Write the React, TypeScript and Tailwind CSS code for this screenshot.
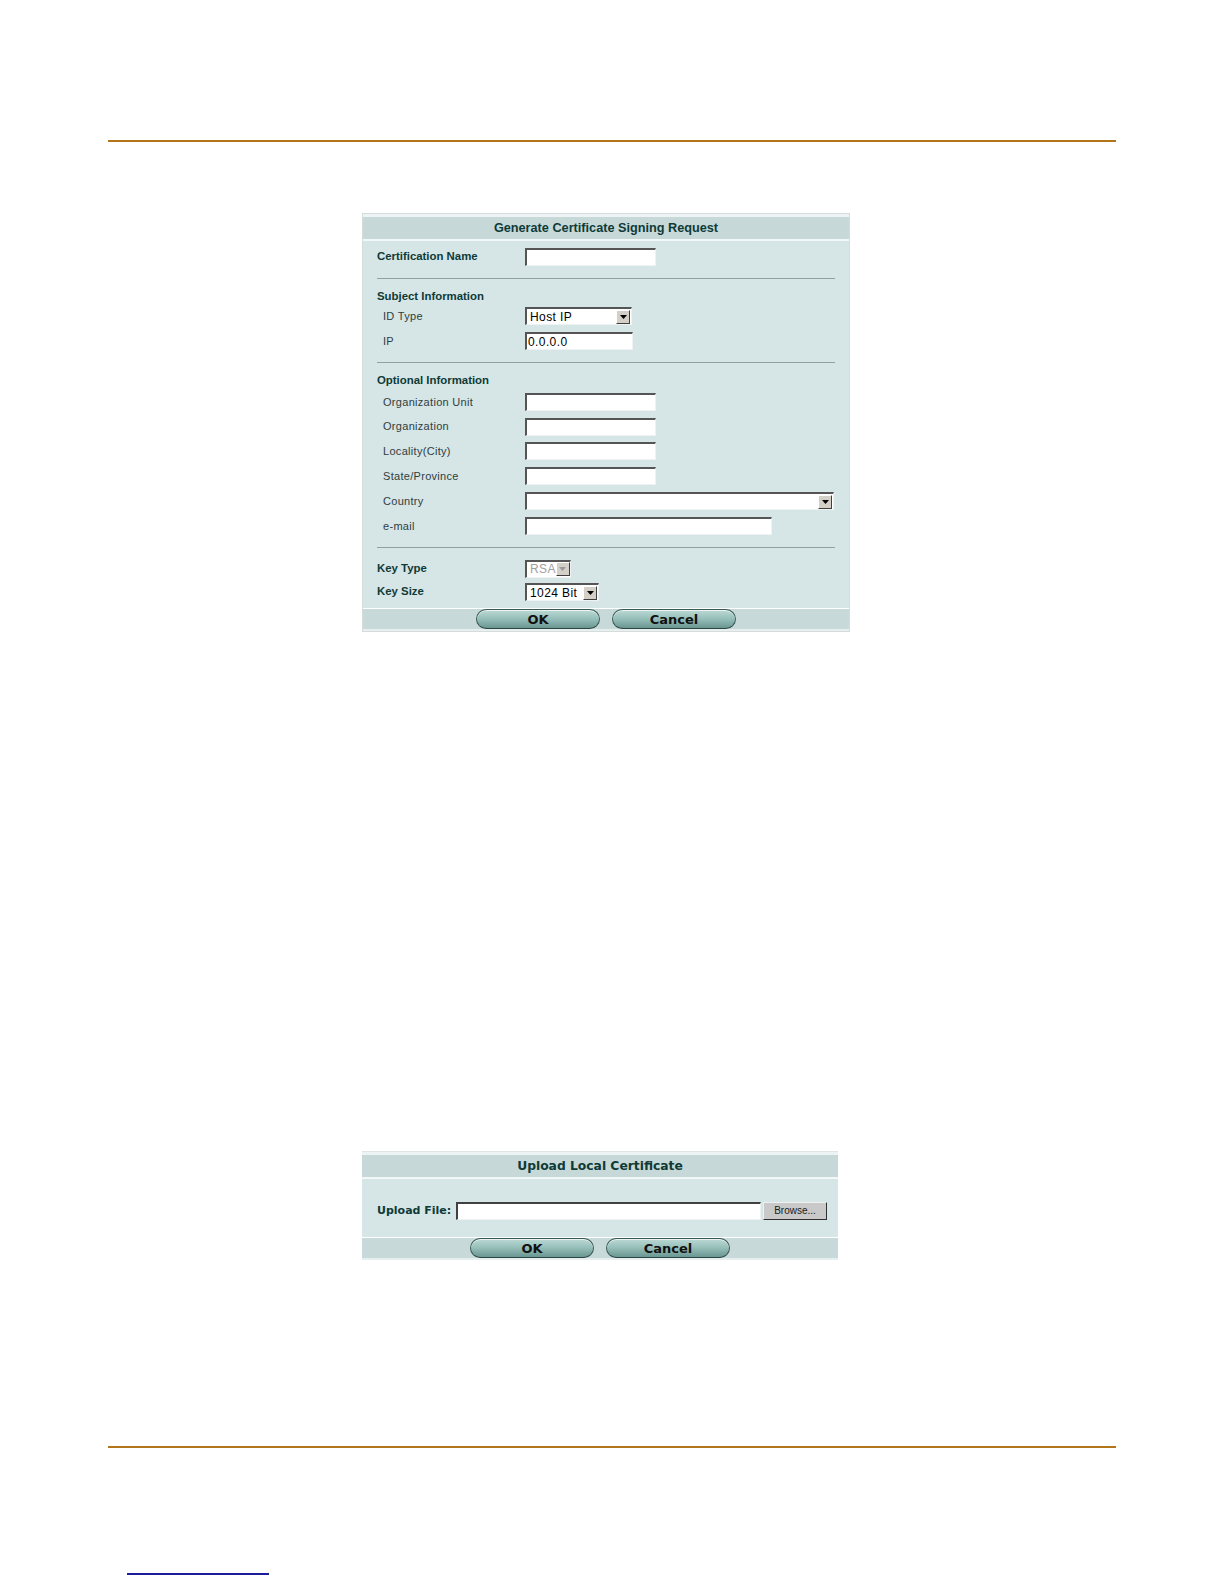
import React from "react";

const FONT = "font-['Liberation_Sans',Arial,sans-serif]";
const VERDANA = "font-['DejaVu_Sans',Verdana,sans-serif]";

function Arrow({ disabled }: { disabled?: boolean }) {
  return (
    <div className="w-[14px] h-[14px] bg-[#d4d0c8] border border-t-white border-l-white border-b-[#404040] border-r-[#404040] flex items-center justify-center shrink-0">
      <svg width="7" height="4" viewBox="0 0 7 4">
        <path d="M0 0h7L3.5 4z" fill={disabled ? "#9a9a9a" : "#000"} />
      </svg>
    </div>
  );
}

function TextBox({ w, value }: { w: string; value?: string }) {
  return (
    <div className={`${w} h-[18px] bg-white border-t-2 border-l-2 border-b border-r border-t-[#555] border-l-[#555] border-b-[#eef2f2] border-r-[#eef2f2] flex items-center pl-[1px] text-[12px] tracking-[0.4px] text-black`}>
      {value}
    </div>
  );
}

function SelectBox({ w, value, disabled }: { w: string; value?: string; disabled?: boolean }) {
  return (
    <div className={`${w} h-[18px] bg-white border-t-2 border-l-2 border-b border-r border-t-[#555] border-l-[#555] border-b-[#eef2f2] border-r-[#eef2f2] flex items-center justify-between pr-[1px]`}>
      <span className={`pl-[3px] text-[12px] tracking-[0.4px] ${disabled ? "text-[#a0a0a0]" : "text-black"}`}>{value}</span>
      <Arrow disabled={disabled} />
    </div>
  );
}

function Pill({ label }: { label: string }) {
  return (
    <div className={`w-[124px] h-[20px] rounded-full border border-[#3a5a56] border-b-[#2c4643] bg-gradient-to-b from-[#bcd9d5] via-[#95beb9] to-[#6a9691] shadow-[inset_0_1px_0_rgba(255,255,255,0.7)] flex items-center justify-center ${VERDANA} text-[13px] font-bold text-[#111]`}>
      {label}
    </div>
  );
}

function Row({ label, bold, h, children }: { label: string; bold?: boolean; h: string; children: React.ReactNode }) {
  return (
    <div className={`flex items-center ${h}`}>
      <div
        className={
          bold
            ? "w-[148px] text-[11.4px] font-bold text-[#0e3a37]"
            : "w-[148px] pl-[6px] text-[11px] tracking-[0.3px] text-[#2f3e3e]"
        }
      >
        {label}
      </div>
      {children}
    </div>
  );
}

function Sep() {
  return <div className="h-px bg-[#8ea2a2]" />;
}

// header band shared by both dialogs: thin light rim, band, white rule under it
function DialogHead({ children, className }: { children: React.ReactNode; className: string }) {
  return (
    <>
      <div className="h-[3px] bg-[#eef3f3]" />
      <div className={`h-[22px] bg-[#c6d8d8] flex items-center justify-center text-[#0e3a37] ${className}`}>{children}</div>
      <div className="h-[2px] bg-[#f2f7f7]" />
    </>
  );
}

function DialogFoot() {
  return (
    <>
      <div className="h-px bg-white" />
      <div className="bg-[#c7d9d8] h-[20px] flex items-start justify-center gap-[12px]">
        <Pill label="OK" />
        <Pill label="Cancel" />
      </div>
      <div className="h-[2px] bg-[#e6eeee]" />
    </>
  );
}

function CsrPanel() {
  return (
    <div className="ml-[362px] w-[488px] border border-[#d6dcdc] bg-[#d6e5e6]">
      <DialogHead className="text-[12.7px] font-bold pt-[2px]">Generate Certificate Signing Request</DialogHead>
      <div className="pl-[14px] pr-[14px] pt-[3px]">
        <Row label="Certification Name" bold h="h-[26px]">
          <TextBox w="w-[131px]" />
        </Row>
        <div className="mt-[7.5px]">
          <Sep />
        </div>
        <div className="h-[25px] pt-[9px] text-[11.4px] font-bold text-[#0e3a37] leading-[16px]">Subject Information</div>
        <Row label="ID Type" h="h-[25.5px]">
          <SelectBox w="w-[107px]" value="Host IP" />
        </Row>
        <Row label="IP" h="h-[24px]">
          <TextBox w="w-[108px]" value="0.0.0.0" />
        </Row>
        <div className="mt-[9px]">
          <Sep />
        </div>
        <div className="h-[26.5px] pt-[9px] text-[11.4px] font-bold text-[#0e3a37] leading-[17px]">Optional Information</div>
        <Row label="Organization Unit" h="h-[24.8px]">
          <TextBox w="w-[131px]" />
        </Row>
        <Row label="Organization" h="h-[24.8px]">
          <TextBox w="w-[131px]" />
        </Row>
        <Row label="Locality(City)" h="h-[24.8px]">
          <TextBox w="w-[131px]" />
        </Row>
        <Row label="State/Province" h="h-[24.8px]">
          <TextBox w="w-[131px]" />
        </Row>
        <Row label="Country" h="h-[24.8px]">
          <SelectBox w="w-[309px]" />
        </Row>
        <Row label="e-mail" h="h-[24.8px]">
          <TextBox w="w-[247px]" />
        </Row>
        <div className="mt-[9px]">
          <Sep />
        </div>
        <div className="mt-[8.5px]">
          <Row label="Key Type" bold h="h-[23.5px]">
            <SelectBox w="w-[46px]" value="RSA" disabled />
          </Row>
          <Row label="Key Size" bold h="h-[23.5px]">
            <SelectBox w="w-[74px]" value="1024 Bit" />
          </Row>
        </div>
      </div>
      <div className="mt-[4.7px]">
        <DialogFoot />
      </div>
    </div>
  );
}

function UploadPanel() {
  return (
    <div className="ml-[362px] w-[476px] border-t border-[#dfe5e5] bg-[#d6e5e6]">
      <DialogHead className={`${VERDANA} text-[12.3px] font-bold`}>Upload Local Certificate</DialogHead>
      <div className="h-[58px] flex items-center pl-[15px] pt-[5px]">
        <span className={`${VERDANA} text-[11px] font-bold text-[#0e3a37] w-[79px]`}>Upload File:</span>
        <div className="w-[305px] h-[18px] bg-white border-t-2 border-l-2 border-b border-r border-t-[#404040] border-l-[#404040] border-b-[#eef2f2] border-r-[#eef2f2]" />
        <div className="ml-[2px] w-[64px] h-[18px] bg-[#c9c9c9] border border-t-[#f0f0f0] border-l-[#f0f0f0] border-b-[#303030] border-r-[#303030] flex items-center justify-center text-[10px] text-[#202020]">
          Browse...
        </div>
      </div>
      <DialogFoot />
    </div>
  );
}

export default function App() {
  return (
    <div className={`w-[1224px] h-[1584px] overflow-hidden bg-white pt-[140px] ${FONT}`}>
      <div className="ml-[108px] w-[1008px] h-[2px] bg-[#b3751a]" />
      <div className="mt-[71px]">
        <CsrPanel />
      </div>
      <div className="mt-[519px]">
        <UploadPanel />
      </div>
      <div className="mt-[186px] ml-[108px] w-[1008px] h-[2px] bg-[#b3751a]" />
      <div className="mt-[125px] ml-[127px] w-[142px] h-[2px] bg-[#1c1c9a]" />
    </div>
  );
}
